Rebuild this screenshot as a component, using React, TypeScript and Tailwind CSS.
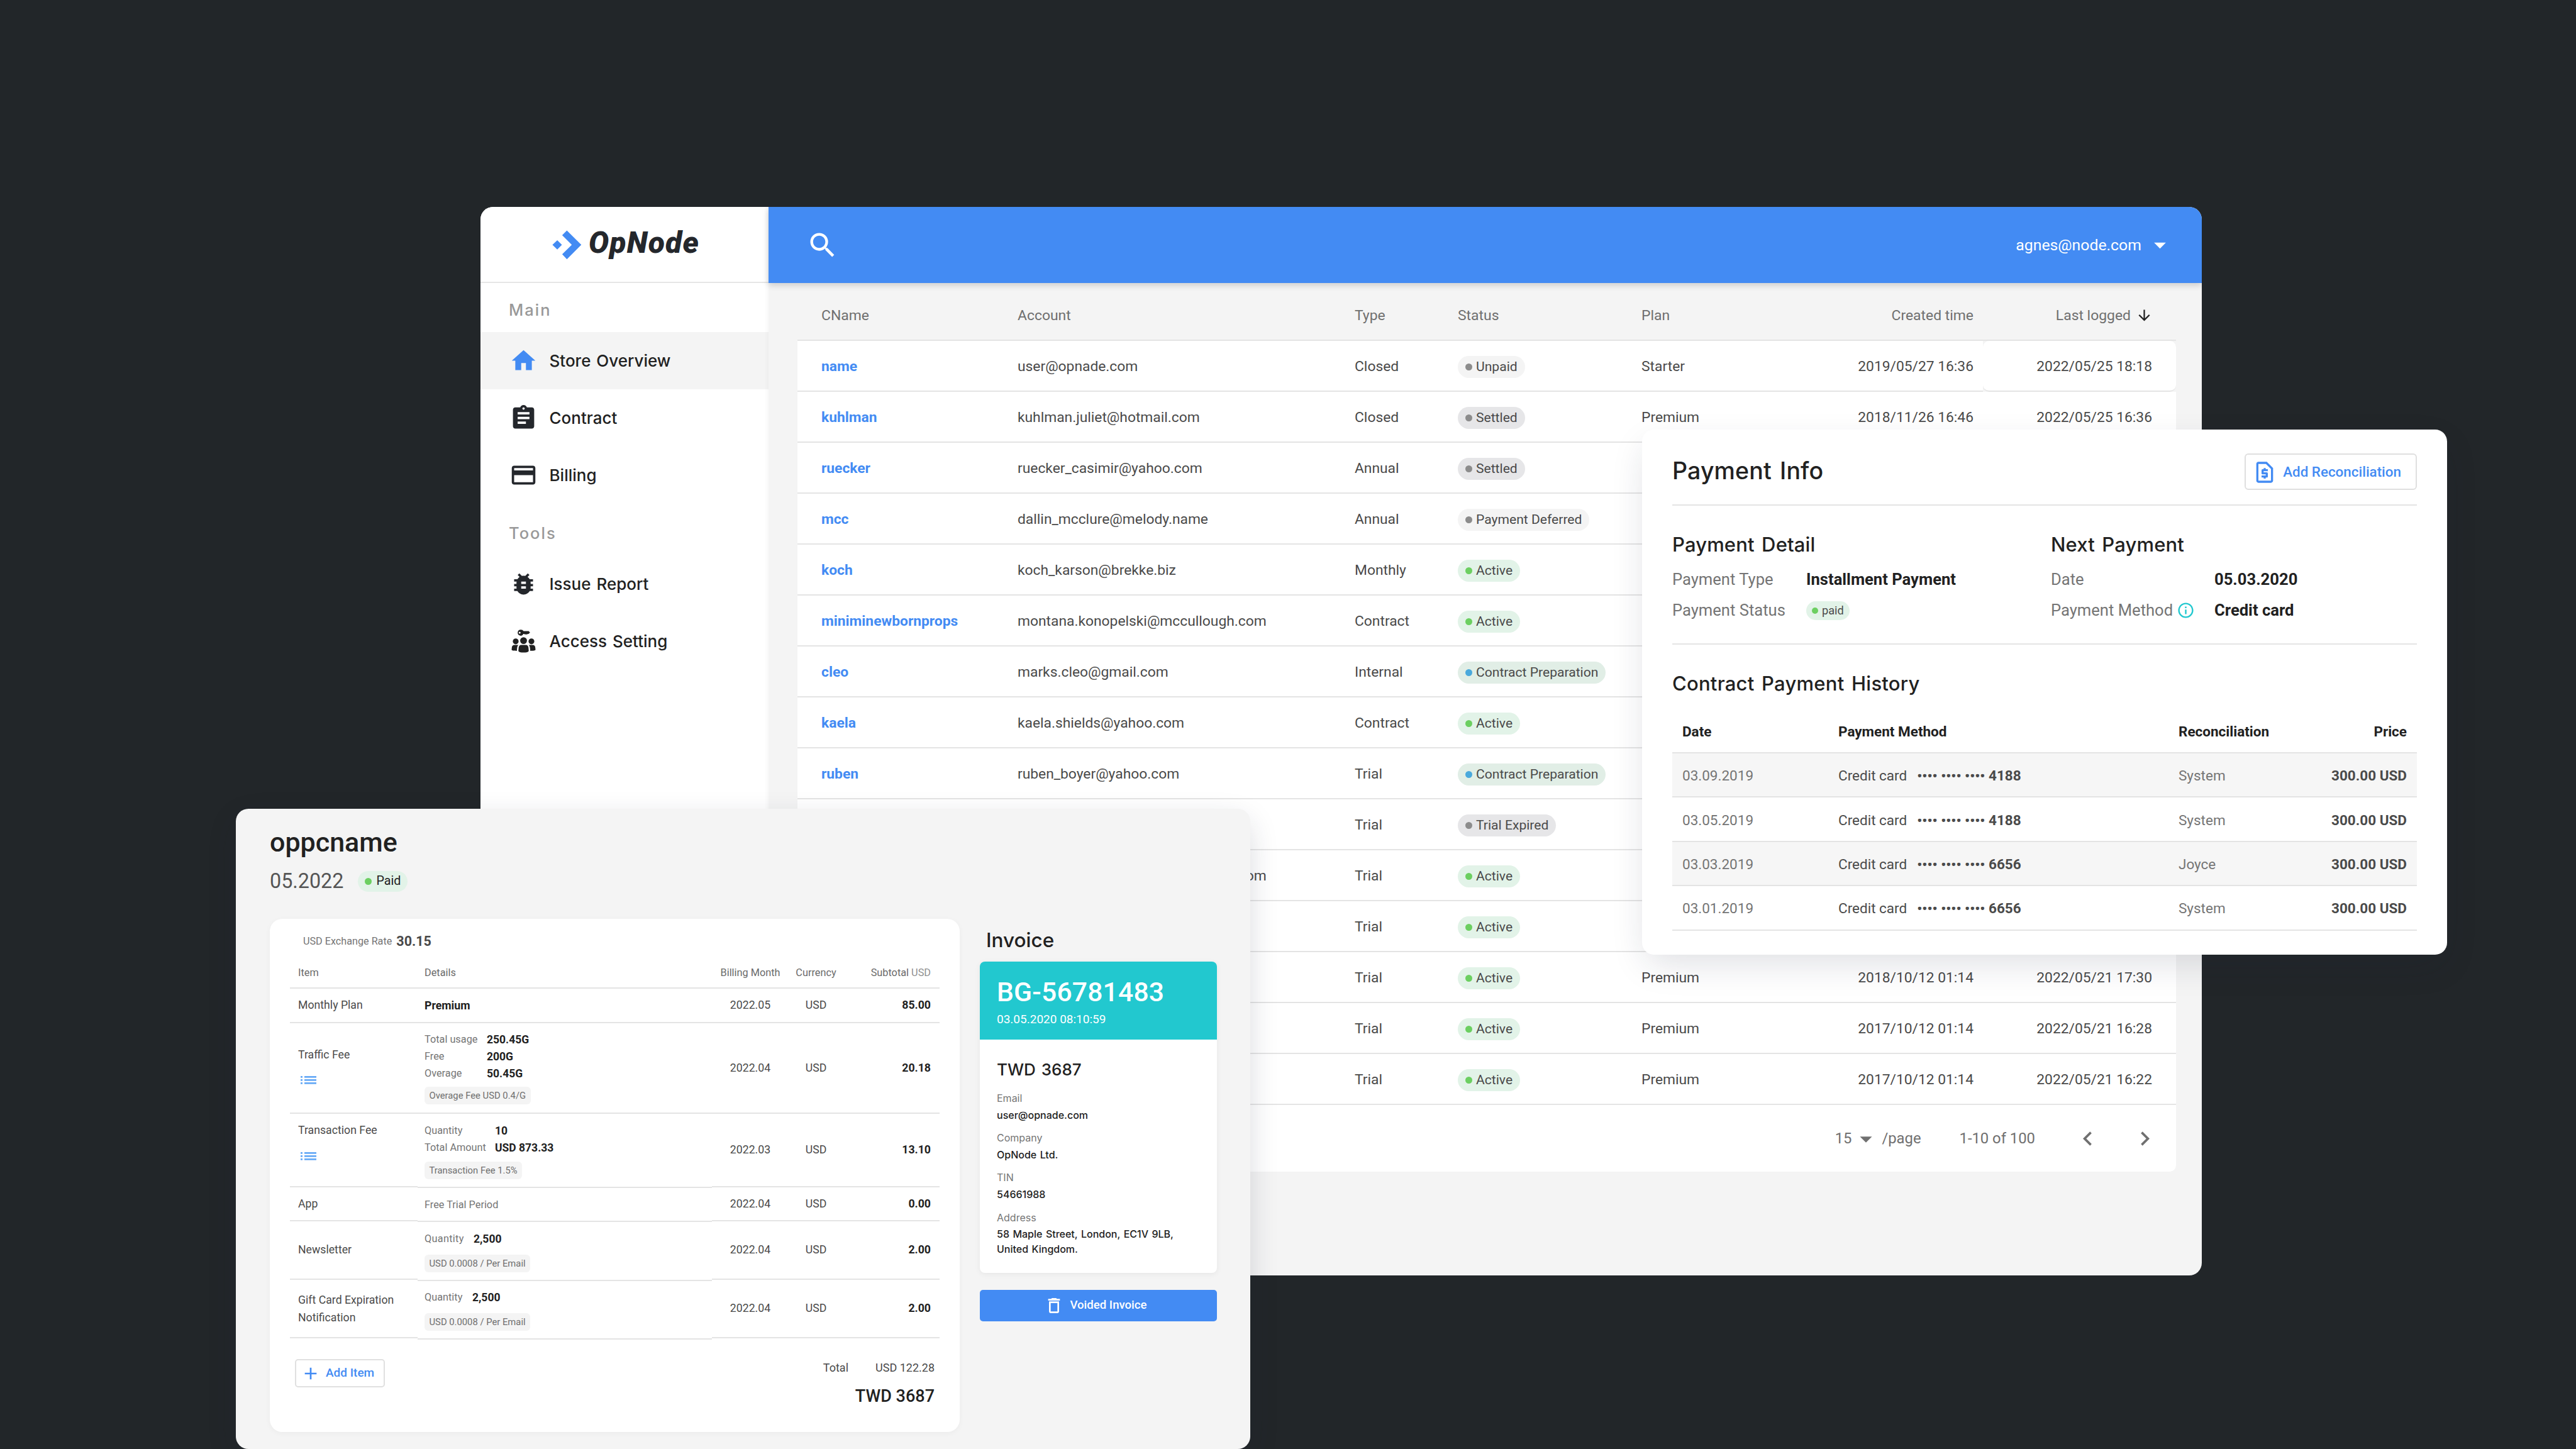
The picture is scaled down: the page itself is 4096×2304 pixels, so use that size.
import React from 'react';
import {
  MdAdd,
  MdArrowDownward,
  MdArrowDropDown,
  MdAssignment,
  MdBugReport,
  MdChevronLeft,
  MdChevronRight,
  MdDeleteOutline,
  MdHome,
  MdInfoOutline,
  MdOutlineRequestPage,
  MdPayment,
  MdSearch
} from 'react-icons/md';
import clsx from 'clsx';

type Status =
  | 'Unpaid'
  | 'Settled'
  | 'Payment Deferred'
  | 'Active'
  | 'Contract Preparation'
  | 'Trial Expired';

interface Store {
  name: string;
  account: string;
  type: string;
  status: Status;
  plan: string;
  created: string;
  lastLogged: string;
}

const stores: Store[] = [
  { name: 'name', account: 'user@opnade.com', type: 'Closed', status: 'Unpaid', plan: 'Starter', created: '2019/05/27 16:36', lastLogged: '2022/05/25 18:18' },
  { name: 'kuhlman', account: 'kuhlman.juliet@hotmail.com', type: 'Closed', status: 'Settled', plan: 'Premium', created: '2018/11/26 16:46', lastLogged: '2022/05/25 16:36' },
  { name: 'ruecker', account: 'ruecker_casimir@yahoo.com', type: 'Annual', status: 'Settled', plan: '', created: '', lastLogged: '' },
  { name: 'mcc', account: 'dallin_mcclure@melody.name', type: 'Annual', status: 'Payment Deferred', plan: '', created: '', lastLogged: '' },
  { name: 'koch', account: 'koch_karson@brekke.biz', type: 'Monthly', status: 'Active', plan: '', created: '', lastLogged: '' },
  { name: 'miniminewbornprops', account: 'montana.konopelski@mccullough.com', type: 'Contract', status: 'Active', plan: '', created: '', lastLogged: '' },
  { name: 'cleo', account: 'marks.cleo@gmail.com', type: 'Internal', status: 'Contract Preparation', plan: '', created: '', lastLogged: '' },
  { name: 'kaela', account: 'kaela.shields@yahoo.com', type: 'Contract', status: 'Active', plan: '', created: '', lastLogged: '' },
  { name: 'ruben', account: 'ruben_boyer@yahoo.com', type: 'Trial', status: 'Contract Preparation', plan: '', created: '', lastLogged: '' },
  { name: '', account: '', type: 'Trial', status: 'Trial Expired', plan: '', created: '', lastLogged: '' },
  { name: '', account: 'montana.konopelski@mccullough.com', type: 'Trial', status: 'Active', plan: '', created: '', lastLogged: '' },
  { name: '', account: '', type: 'Trial', status: 'Active', plan: '', created: '', lastLogged: '' },
  { name: '', account: '', type: 'Trial', status: 'Active', plan: 'Premium', created: '2018/10/12 01:14', lastLogged: '2022/05/21 17:30' },
  { name: '', account: '', type: 'Trial', status: 'Active', plan: 'Premium', created: '2017/10/12 01:14', lastLogged: '2022/05/21 16:28' },
  { name: '', account: '', type: 'Trial', status: 'Active', plan: 'Premium', created: '2017/10/12 01:14', lastLogged: '2022/05/21 16:22' }
];

const statusStyles: Record<Status, { badge: string; dot: string }> = {
  Unpaid: { badge: 'bg-[#f4f4f4]', dot: 'bg-[#8c8c8c]' },
  Settled: { badge: 'bg-[#e6e6e8]', dot: 'bg-[#8c8c8c]' },
  'Payment Deferred': { badge: 'bg-[#f4f4f4]', dot: 'bg-[#8c8c8c]' },
  Active: { badge: 'bg-[#e2f3e8]', dot: 'bg-[#6ccf61]' },
  'Contract Preparation': { badge: 'bg-[#e1eee6]', dot: 'bg-[#4aa9dc]' },
  'Trial Expired': { badge: 'bg-[#e6e6e8]', dot: 'bg-[#8c8c8c]' }
};

const payments = [
  { date: '03.09.2019', card: '4188', by: 'System' },
  { date: '03.05.2019', card: '4188', by: 'System' },
  { date: '03.03.2019', card: '6656', by: 'Joyce' },
  { date: '03.01.2019', card: '6656', by: 'System' }
];

const invoiceFields = [
  { label: 'Email', value: 'user@opnade.com' },
  { label: 'Company', value: 'OpNode Ltd.' },
  { label: 'TIN', value: '54661988' },
  { label: 'Address', value: '58 Maple Street, London, EC1V 9LB, United Kingdom.' }
];

const Logo: React.FC = () => (
  <svg className="h-[47px] w-[47px]" viewBox="0 0 47 47" fill="#438bf3">
    <polygon points="23.4,0.6 46.3,23.2 23.4,46.3 15.9,38.3 31.2,23.2 15.9,8" />
    <polygon points="0.4,23.2 8.1,15.9 15.5,23.2 8.1,30.8" />
  </svg>
);

const AccessIcon: React.FC = () => (
  <svg className="h-[45px] w-[45px]" viewBox="0 0 45 45" fill="#212121">
    <path
      fillRule="evenodd"
      d="M18 4.2a4.8 4.8 0 1 0 4.3 6.9h1.5l1.2 1.2 1.3-1.2 1.3 1.2 1.3-1.2h1.6l2.3-2.3-2.1-2.2h-8.2A4.8 4.8 0 0 0 18 4.2zM16.3 7.5a1.5 1.5 0 1 1 0 3 1.5 1.5 0 0 1 0-3z"
    />
    <circle cx="22.5" cy="21.6" r="5.4" />
    <circle cx="10" cy="22.8" r="4.6" />
    <circle cx="35" cy="22.8" r="4.6" />
    <path d="M19 28.6h7c2.9 0 4 2 4.3 4.5l.4 4.7c0 2.2-3.7 2.8-8.2 2.8s-8.2-.6-8.2-2.8l.4-4.7c.3-2.5 1.4-4.5 4.3-4.5z" />
    <path d="M8 28.6h6.3c-1.4 1.3-1.9 3.2-2.1 5.2l-.4 4.1c-4.3 0-8.3-.2-8.3-1.8l.3-3.2c.2-2.4 1.6-4.3 4.2-4.3z" />
    <path d="M37 28.6h-6.3c1.4 1.3 1.9 3.2 2.1 5.2l.4 4.1c4.3 0 8.3-.2 8.3-1.8l-.3-3.2c-.2-2.4-1.6-4.3-4.2-4.3z" />
  </svg>
);

const ListIcon: React.FC = () => (
  <svg className="h-[13px] w-[25px]" viewBox="0 0 25 13" fill="#65a9f6">
    {[0, 5, 10].map((y) => (
      <g key={y}>
        <rect x="0" y={y} width="3" height="2.7" />
        <rect x="6" y={y} width="19" height="2.7" />
      </g>
    ))}
  </svg>
);

interface NavItemProps {
  icon: React.ReactNode;
  label: string;
  active?: boolean;
}

const NavItem: React.FC<NavItemProps> = ({ icon, label, active }) => (
  <div className={clsx('flex h-[91px] items-center gap-[18.5px] pl-[46px]', active && 'bg-[#f4f4f4]')}>
    {icon}
    <span className="font-[family-name:Inter,sans-serif] text-[26px] font-medium text-[#212121] [word-spacing:2px]">
      {label}
    </span>
  </div>
);

const Sidebar: React.FC = () => (
  <aside className="w-[458px] shrink-0 bg-white">
    <div className="flex h-[121px] items-center gap-[11px] border-b-2 border-[#e6e6e6] pt-[2px] pl-[114px]">
      <Logo />
      <span className="-mt-[8px] text-[48px] leading-none font-black tracking-[1.2px] text-[#24272c] italic">OpNode</span>
    </div>
    <div className="flex h-[78px] items-center pt-[9px] pl-[45px] font-[family-name:Inter,sans-serif] text-[25.5px] font-medium tracking-[2px] text-[#999]">
      Main
    </div>
    <NavItem active label="Store Overview" icon={<MdHome className="text-[45px] text-[#438bf3]" />} />
    <NavItem label="Contract" icon={<MdAssignment className="text-[45px] text-[#24272c]" />} />
    <NavItem label="Billing" icon={<MdPayment className="text-[45px] text-[#24272c]" />} />
    <div className="flex h-[82px] items-center pt-[13px] pl-[45px] font-[family-name:Inter,sans-serif] text-[25.5px] font-medium tracking-[2px] text-[#999]">
      Tools
    </div>
    <NavItem label="Issue Report" icon={<MdBugReport className="text-[45px] text-[#24272c]" />} />
    <NavItem label="Access Setting" icon={<AccessIcon />} />
  </aside>
);

const StatusBadge: React.FC<{ status: Status }> = ({ status }) => (
  <span
    className={clsx(
      'inline-flex h-[35px] items-center gap-[6px] rounded-full px-[12px] text-[21.1px] text-[#4a4a4a]',
      statusStyles[status].badge
    )}
  >
    <i className={clsx('h-[11px] w-[11px] rounded-full', statusStyles[status].dot)} />
    {status}
  </span>
);

const StoreTable: React.FC = () => (
  <div className="pt-[14px] pr-[41px] pl-[46px]">
    <div className="flex h-[78px] items-center border-b-2 border-[#e4e4e4] pl-[38px] text-[22.9px] text-[#6f6f6f]">
      <span className="w-[312px]">CName</span>
      <span className="w-[536px]">Account</span>
      <span className="w-[164px]">Type</span>
      <span className="w-[292px]">Status</span>
      <span className="w-[200px]">Plan</span>
      <span className="w-[328px] text-right">Created time</span>
      <span className="flex flex-1 items-center justify-end gap-[8px] pr-[37px]">
        Last logged
        <MdArrowDownward className="text-[27px] text-[#212121]" />
      </span>
    </div>
    {stores.map((store, index) => (
      <div key={index} className="flex h-[81px] bg-white text-[22.8px] text-[#4a4a4a]">
        <div className="flex flex-1 items-center border-b-2 border-[#e4e4e4] pt-[3px] pl-[38px]">
          <span className="w-[312px] font-bold text-[#438bf3]">{store.name}</span>
          <span className="w-[536px]">{store.account}</span>
          <span className="w-[164px]">{store.type}</span>
          <span className="flex w-[292px]">
            <StatusBadge status={store.status} />
          </span>
          <span className="w-[200px]">{store.plan}</span>
          <span className="w-[328px] text-right">{store.created}</span>
        </div>
        <div className={clsx('w-[307px]', index === 0 && 'bg-[#f4f4f4]')}>
          <div
            className={clsx(
              'flex h-full items-center justify-end border-b-2 border-[#e4e4e4] bg-white pt-[3px] pr-[38px]',
              index === 0 && 'rounded-[10px]'
            )}
          >
            {store.lastLogged}
          </div>
        </div>
      </div>
    ))}
    <div className="flex h-[106px] items-center justify-end rounded-b-[10px] bg-white pt-[1px] pr-[27px] text-[23.8px] text-[#707070]">
      <span>15</span>
      <MdArrowDropDown className="text-[46px]" />
      <span className="ml-[2px]">/page</span>
      <span className="ml-[61px]">1-10 of 100</span>
      <MdChevronLeft className="ml-[61px] text-[45px]" />
      <MdChevronRight className="ml-[46px] text-[45px]" />
    </div>
  </div>
);

const Dashboard: React.FC = () => (
  <div className="absolute top-[329px] left-[764px] flex h-[1699px] w-[2737px] overflow-hidden rounded-[20px] bg-[#f4f4f4]">
    <Sidebar />
    <div className="flex flex-1 flex-col shadow-[0_0_8px_rgba(0,0,0,0.06)]">
      <header className="flex h-[121px] items-center justify-between bg-[#438bf3] pr-[44px] pl-[60px] text-white shadow-[0_3px_10px_rgba(0,0,0,0.18)]">
        <MdSearch className="text-[52px]" />
        <div className="flex items-center gap-[7px] text-[24.8px]">
          agnes@node.com
          <MdArrowDropDown className="text-[45px]" />
        </div>
      </header>
      <StoreTable />
    </div>
  </div>
);

const PaymentInfo: React.FC = () => (
  <div className="absolute top-[683px] left-[2611px] h-[835px] w-[1280px] rounded-[19px] bg-white px-[48px] text-[#212121] shadow-[0_20px_56px_-8px_rgba(30,35,60,0.15)]">
    <div className="flex h-[121px] items-center justify-between border-b-2 border-[#e4e4e4] pt-[15px]">
      <h2 className="-mt-[2px] font-[family-name:Inter,sans-serif] text-[37.5px] font-medium tracking-[0.15px] [word-spacing:3px]">Payment Info</h2>
      <button className="flex h-[58px] items-center gap-[9px] rounded-[6px] border-2 border-[#dfdfdf] pt-[1px] pr-[23px] pl-[10px] text-[22.4px] font-medium text-[#438bf3]">
        <MdOutlineRequestPage className="text-[40px]" />
        Add Reconciliation
      </button>
    </div>

    <div className="flex h-[221px] border-b-2 border-[#e4e4e4] pt-[40px]">
      <div className="w-[602px]">
        <h3 className="mb-[9px] h-[44px] font-[family-name:Inter,sans-serif] text-[31px] leading-[44px] font-medium tracking-[0.15px] [word-spacing:3px]">Payment Detail</h3>
        <div className="flex h-[49px] items-center text-[25.6px]">
          <span className="w-[213px] text-[#757575]">Payment Type</span>
          <span className="font-bold">Installment Payment</span>
        </div>
        <div className="flex h-[49px] items-center text-[25.6px]">
          <span className="w-[213px] text-[#757575]">Payment Status</span>
          <span className="flex h-[30px] items-center gap-[6px] rounded-full bg-[#e2f3e8] px-[9px] text-[18.2px] text-[#4a4a4a]">
            <i className="h-[10px] w-[10px] rounded-full bg-[#6ccf61]" />
            paid
          </span>
        </div>
      </div>
      <div className="flex-1">
        <h3 className="mb-[9px] h-[44px] font-[family-name:Inter,sans-serif] text-[31px] leading-[44px] font-medium tracking-[0.15px] [word-spacing:3px]">Next Payment</h3>
        <div className="flex h-[49px] items-center text-[25.6px]">
          <span className="w-[260px] text-[#757575]">Date</span>
          <span className="font-bold">05.03.2020</span>
        </div>
        <div className="flex h-[49px] items-center text-[25.6px]">
          <span className="flex w-[260px] items-center gap-[6px] text-[#757575]">
            Payment Method
            <MdInfoOutline className="text-[29px] text-[#22c8cf]" />
          </span>
          <span className="font-bold">Credit card</span>
        </div>
      </div>
    </div>

    <h3 className="mt-[40px] mb-[21px] h-[44px] font-[family-name:Inter,sans-serif] text-[31px] leading-[44px] font-medium tracking-[0.25px] [word-spacing:3px]">Contract Payment History</h3>
    <div className="flex h-[68px] items-center border-b-2 border-[#e4e4e4] pt-[2px] pr-[16px] pl-[16px] text-[22.5px] font-bold">
      <span className="w-[248px]">Date</span>
      <span className="w-[541px]">Payment Method</span>
      <span className="flex-1">Reconciliation</span>
      <span>Price</span>
    </div>
    {payments.map((payment, index) => (
      <div
        key={payment.date}
        className={clsx(
          'flex h-[70.4px] items-center border-b-2 border-[#e4e4e4] pt-[4px] pr-[16px] pl-[16px] text-[22.5px] text-[#757575]',
          index % 2 === 0 && 'bg-[#f6f6f6]'
        )}
      >
        <span className="w-[248px]">{payment.date}</span>
        <span className="flex w-[541px] gap-[16px] text-[#4a4a4a]">
          Credit card
          <b>•••• •••• •••• {payment.card}</b>
        </span>
        <span className="flex-1">{payment.by}</span>
        <span className="font-bold text-[#4a4a4a]">300.00 USD</span>
      </div>
    ))}
  </div>
);

const Tag: React.FC<{ children: React.ReactNode }> = ({ children }) => (
  <span className="flex h-[28px] w-fit items-center rounded-[6px] bg-[#f4f4f4] px-[7.5px] text-[14.8px] text-[#6f6f6f]">
    {children}
  </span>
);

interface DetailProps {
  label: string;
  value: string;
  labelClass: string;
}

const Detail: React.FC<DetailProps> = ({ label, value, labelClass }) => (
  <div className="flex h-[26.7px] items-center">
    <span className={clsx('text-[16.3px] text-[#757575]', labelClass)}>{label}</span>
    <span className="text-[17.5px] font-bold text-[#212121]">{value}</span>
  </div>
);

interface LineProps {
  item: React.ReactNode;
  details: React.ReactNode;
  month: string;
  subtotal: string;
  rowClass: string;
  detailsClass?: string;
}

const Line: React.FC<LineProps> = ({ item, details, month, subtotal, rowClass, detailsClass }) => (
  <div className={clsx('flex text-[17.7px] text-[#4a4a4a]', rowClass)}>
    <div className="flex w-[203px] flex-col justify-center border-b-2 border-[#e4e4e4] pl-[13px]">{item}</div>
    <div className={clsx('w-[468px] border-b-2 border-[#e4e4e4] pl-[11px]', detailsClass)}>{details}</div>
    <div className="flex flex-1 items-center border-b-2 border-[#e4e4e4]">
      <span className="w-[122px] text-center">{month}</span>
      <span className="w-[87px] text-center">USD</span>
      <span className="flex-1 pr-[14px] text-right font-bold text-[#212121]">{subtotal}</span>
    </div>
  </div>
);

const BillingCard: React.FC = () => (
  <div className="h-[816px] w-[1097px] rounded-[20px] bg-white px-[32px] shadow-[0_2px_10px_rgba(0,0,0,0.04)]">
    <div className="flex h-[61px] items-center gap-[7px] pt-[11px] pl-[21px] text-[16.2px] text-[#757575]">
      USD Exchange Rate
      <b className="text-[21.5px] text-[#4a4a4a]">30.15</b>
    </div>
    <div className="flex h-[50px] items-center border-b-2 border-[#e4e4e4] pt-[2px] pl-[13px] text-[16.3px] text-[#6a6a6a]">
      <span className="w-[201px]">Item</span>
      <span className="w-[457px]">Details</span>
      <span className="w-[122px] text-center">Billing Month</span>
      <span className="w-[87px] text-center">Currency</span>
      <span className="flex-1 pr-[14px] text-right">
        Subtotal <span className="text-[#8f8f8f]">USD</span>
      </span>
    </div>
    <Line
      rowClass="h-[55px]"
      item="Monthly Plan"
      details={<b className="leading-[54px] text-[#212121]">Premium</b>}
      month="2022.05"
      subtotal="85.00"
    />
    <Line
      rowClass="h-[144px]"
      item={
        <div className="flex flex-col gap-[13px] pb-[2px]">
          <span className="leading-[27px]">Traffic Fee</span>
          <span className="flex h-[27px] items-center pl-[4px]">
            <ListIcon />
          </span>
        </div>
      }
      details={
        <div className="pt-[13px]">
          <Detail label="Total usage" value="250.45G" labelClass="w-[99px]" />
          <Detail label="Free" value="200G" labelClass="w-[99px]" />
          <Detail label="Overage" value="50.45G" labelClass="w-[99px]" />
          <div className="pt-[8px]">
            <Tag>Overage Fee USD 0.4/G</Tag>
          </div>
        </div>
      }
      month="2022.04"
      subtotal="20.18"
    />
    <Line
      rowClass="h-[117px]"
      detailsClass="-mb-px"
      item={
        <div className="flex flex-col gap-[14px] pb-[22px]">
          <span className="leading-[27px]">Transaction Fee</span>
          <span className="flex h-[27px] items-center pl-[4px]">
            <ListIcon />
          </span>
        </div>
      }
      details={
        <div className="pt-[14px]">
          <Detail label="Quantity" value="10" labelClass="w-[112px]" />
          <Detail label="Total Amount" value="USD 873.33" labelClass="w-[112px]" />
          <div className="pt-[9px]">
            <Tag>Transaction Fee 1.5%</Tag>
          </div>
        </div>
      }
      month="2022.03"
      subtotal="13.10"
    />
    <Line
      rowClass="h-[54px]"
      detailsClass="-mb-px"
      item="App"
      details={<span className="text-[16.3px] leading-[56px] text-[#757575]">Free Trial Period</span>}
      month="2022.04"
      subtotal="0.00"
    />
    <Line
      rowClass="h-[93px]"
      detailsClass="-mb-[2px]"
      item="Newsletter"
      details={
        <div className="pt-[15px]">
          <Detail label="Quantity" value="2,500" labelClass="w-[78px] tracking-[0.3px]" />
          <div className="pt-[11px]">
            <Tag>USD 0.0008 / Per Email</Tag>
          </div>
        </div>
      }
      month="2022.04"
      subtotal="2.00"
    />
    <Line
      rowClass="h-[93px]"
      detailsClass="-mb-[2px]"
      item={<span className="leading-[28px]">Gift Card Expiration Notification</span>}
      details={
        <div className="pt-[15px]">
          <Detail label="Quantity" value="2,500" labelClass="w-[76px]" />
          <div className="pt-[11px]">
            <Tag>USD 0.0008 / Per Email</Tag>
          </div>
        </div>
      }
      month="2022.04"
      subtotal="2.00"
    />
    <div className="flex items-start justify-between px-[8px] pt-[23px]">
      <button className="mt-[10px] flex h-[45px] items-center gap-[8px] rounded-[5px] border-2 border-[#e0e0e0] pr-[15px] pl-[7px] text-[19px] font-medium text-[#438bf3]">
        <MdAdd className="text-[32px]" />
        Add Item
      </button>
      <div className="flex flex-col items-end">
        <div className="flex h-[46px] items-center gap-[43px] text-[18px] text-[#4a4a4a]">
          <span>Total</span>
          <span>USD 122.28</span>
        </div>
        <div className="flex h-[46px] items-center text-[27px] font-medium text-[#212121]">TWD 3687</div>
      </div>
    </div>
  </div>
);

const InvoiceCard: React.FC = () => (
  <div className="w-[377px]">
    <h3 className="h-[68px] pl-[10px] font-[family-name:Inter,sans-serif] text-[31.5px] leading-[68px] font-medium text-[#212121]">Invoice</h3>
    <div className="h-[495px] overflow-hidden rounded-[8px] bg-white shadow-[0_2px_10px_rgba(0,0,0,0.06)]">
      <div className="h-[124px] bg-[#22c8cf] pt-[21px] pl-[27px] text-white">
        <div className="text-[42.6px] leading-[54px] font-medium tracking-[0.2px]">BG-56781483</div>
        <div className="text-[19px] leading-[34px]">03.05.2020 08:10:59</div>
      </div>
      <div className="pt-[30px] pl-[27px] font-[family-name:Inter,sans-serif]">
        <div className="mb-[16px] text-[26px] leading-[36px] font-medium text-[#212121] [word-spacing:2px]">TWD 3687</div>
        {invoiceFields.map((field) => (
          <div key={field.label} className="mb-[13px] text-[16px] leading-[23.6px]">
            <div className="mb-[3px] text-[#757575]">{field.label}</div>
            <div className="w-[330px] font-medium text-[#212121] [word-spacing:1.2px]">{field.value}</div>
          </div>
        ))}
      </div>
    </div>
    <button className="mt-[27px] flex h-[50px] w-full items-center justify-center gap-[9px] rounded-[5px] bg-[#438bf3] pr-[9px] text-[18.6px] font-medium text-white">
      <MdDeleteOutline className="text-[32px]" />
      Voided Invoice
    </button>
  </div>
);

const InvoicePanel: React.FC = () => (
  <div className="absolute top-[1286px] left-[375px] h-[1018px] w-[1613px] rounded-[20px] bg-[#f4f4f4] pt-[28px] pl-[54px] shadow-[0_16px_50px_-6px_rgba(30,35,60,0.2)]">
    <h1 className="h-[50px] text-[43px] leading-[51px] font-medium text-[#212121]">oppcname</h1>
    <div className="mt-[19px] mb-[42px] flex h-[36px] items-center gap-[23px] text-[32.3px] text-[#555]">
      05.2022
      <span className="flex h-[33px] items-center gap-[7px] rounded-full bg-[#e2f3e8] px-[11px] text-[19.7px] text-[#212121]">
        <i className="h-[11px] w-[11px] rounded-full bg-[#6ccf61]" />
        Paid
      </span>
    </div>
    <div className="flex gap-[32px]">
      <BillingCard />
      <InvoiceCard />
    </div>
  </div>
);

const App: React.FC = () => {
  return (
    <div className="relative h-[2304px] w-[4096px] overflow-hidden bg-[#222629] font-[family-name:Roboto,sans-serif]">
      <Dashboard />
      <PaymentInfo />
      <InvoicePanel />
    </div>
  );
};

export default App;
